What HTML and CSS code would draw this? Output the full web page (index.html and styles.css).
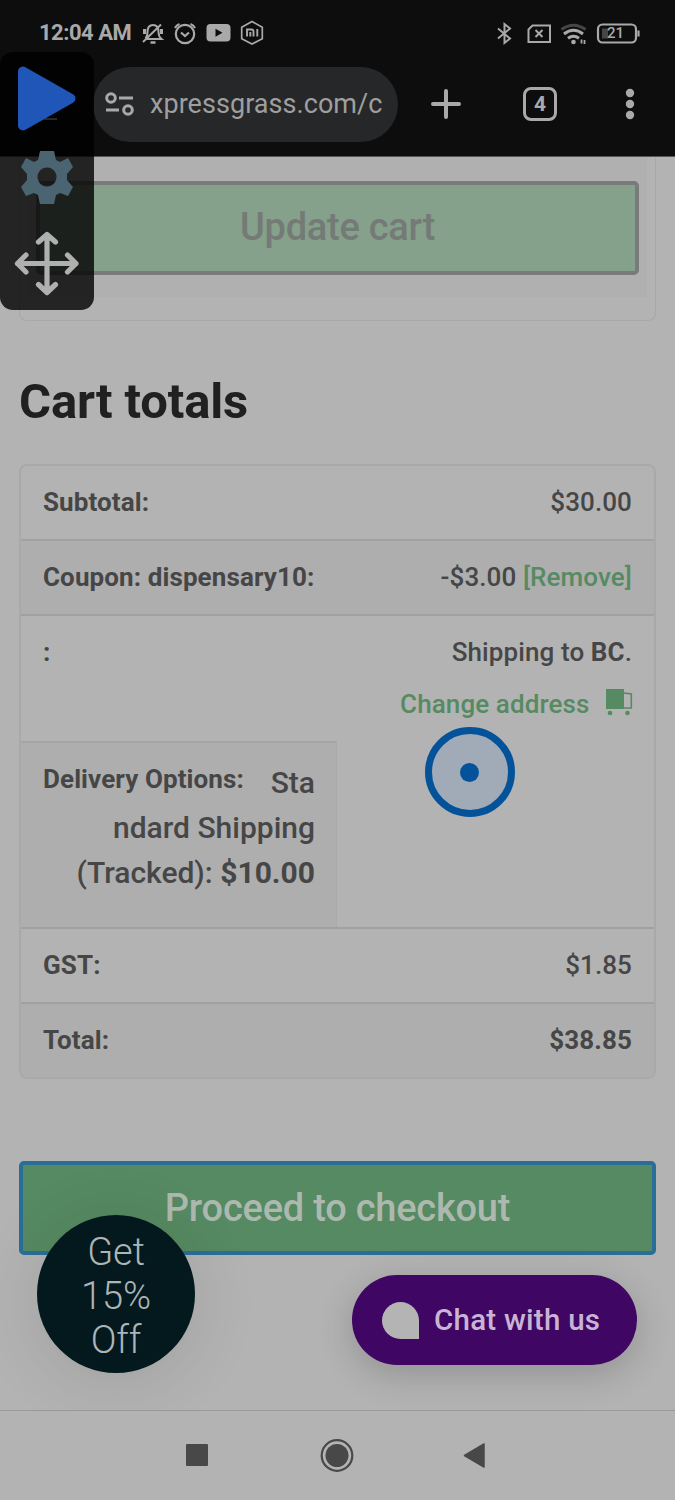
FILE: index.html
```html
<!DOCTYPE html>
<html lang="en">
<head>
<meta charset="utf-8">
<title>Cart</title>
<link rel="stylesheet" href="styles.css">
</head>
<body>
<div class="phone">
  <header class="chrome">
    <div class="status">
      <span class="clock">12:04 AM</span>
      <svg class="status-left" width="130" height="28" viewBox="140 18.500 130 28" fill="none" stroke="#a9a9a9" stroke-width="2">
        <path d="M147 38.500h14.500c-2.500-2-3-3.500-3-7 0-5-2.500-7-5.500-7s-5.500 2-5.500 7c0 3.500-.5 5-2 6.500M143 41.500L161 24"/><path d="M150.500 42h5" stroke-width="2.500"/><path d="M144.500 28.500v5M161.500 28.500v5" stroke-width="3"/>
        <circle cx="185" cy="33.500" r="9.200" stroke-width="2.200"/><path d="M181 32l4 3.500 4-3.500M175 27.500q1.500-3 4.500-4M195 27.500q-1.500-3-4.500-4" stroke-width="2.200"/>
        <rect x="206.500" y="23.500" width="24" height="17.500" rx="4" fill="#a9a9a9" stroke="none"/><path d="M215.500 28.300v8l7-4z" fill="#0d0d0d" stroke="none"/>
        <path d="M252 21l10.300 5.700v11.600L252 43.500l-10.300-5.200V26.700z" stroke-width="1.700"/><path d="M247 36v-7h4.500q2 0 2 2v5M250.300 31.500v4.500M257.300 28.500v7.500" stroke-width="1.900"/>
      </svg>
      <svg class="status-right" width="146" height="28" viewBox="496 18.500 146 28" fill="none" stroke="#a9a9a9" stroke-width="2">
        <path d="M498 28l12 10-5.500 4.500v-19l5.500 4.500-12 10"/>
        <path d="M528.500 29l4-4h17.500V41.500h-21.500z" stroke-width="2"/><path d="M535.500 29.500l7 7M542.500 29.500l-7 7" stroke-width="2"/>
        <path d="M561.500 29q12-8.500 24 0" stroke="#464646" stroke-width="3"/><path d="M564 33.500q9.500-7.500 19 0M568 37.800q5.500-4 11 0" stroke-width="3"/><circle cx="573.500" cy="41.500" r="2.300" fill="#a9a9a9" stroke="none"/><path d="M581.500 39v4M584.500 39.500v4" stroke-width="1.800"/>
        <rect x="598" y="24" width="38" height="18" rx="4.500" stroke-width="2.200"/><path d="M602 28h6v10h-6z" fill="#464646" stroke="none"/><path d="M638.500 30v6" stroke-width="2.200"/>
        <text x="615.500" y="37.700" text-anchor="middle" class="battery">21</text>
      </svg>
    </div>
    <div class="toolbar">
      <div class="address">
        <svg width="30" height="26" viewBox="0 0 30 26" fill="none" stroke="#a9a9a9" stroke-width="3"><circle cx="6" cy="7" r="4.300"/><circle cx="23" cy="19" r="4.300"/><path d="M14 7h14M1 19h13"/></svg>
        <span class="url">xpressgrass.com/c</span>
      </div>
      <svg class="plus" width="32" height="32" viewBox="0 0 32 32" fill="none" stroke="#a9a9a9" stroke-width="4" stroke-linecap="round"><path d="M16 3v26M3 16h26"/></svg>
      <span class="tabs">4</span>
      <svg class="dots" width="10" height="32" viewBox="0 0 10 32" fill="#a9a9a9"><circle cx="5" cy="5" r="4.200"/><circle cx="5" cy="16" r="4.200"/><circle cx="5" cy="27" r="4.200"/></svg>
    </div>
  </header>

  <main class="page">
    <section class="cart-form"><div class="cart-inner"><div class="btn-update"><span>Update cart</span></div></div></section>
    <h2 class="title"><span>Cart totals</span></h2>
    <section class="totals">
      <div class="row"><b>Subtotal:</b><span>$30.00</span></div>
      <div class="row shade"><b>Coupon: dispensary10:</b><span>-$3.00 <a>[Remove]</a></span></div>
      <div class="shipping">
        <div class="ship-left">
          <b class="colon">:</b>
          <div class="delivery"><b class="label">Delivery Options:</b>
            <div class="option"><span>Sta</span><br><span>ndard Shipping</span><br><span>(Tracked): <b>$10.00</b></span></div>
          </div>
        </div>
        <div class="ship-right">
          <div class="dest"><span>Shipping to <b>BC</b>.</span></div>
          <div class="change"><a>Change address</a>
            <svg width="28" height="28" viewBox="0 0 28 28" fill="#568a62"><path d="M1 1h18v20H1z"/><path d="M19 5l7.300 1v14H19" fill="none" stroke="#568a62" stroke-width="1.600"/><circle cx="5" cy="25" r="2.300"/><circle cx="22.500" cy="25" r="2.300"/></svg>
          </div>
        </div>
      </div>
      <div class="row"><b>GST:</b><span>$1.85</span></div>
      <div class="row shade last"><b>Total:</b><b>$38.85</b></div>
    </section>
    <div class="checkout"><span>Proceed to checkout</span></div>
  </main>

  <nav class="navbar">
    <svg width="675" height="89" viewBox="0 1411 675 89" fill="#484848"><rect x="186" y="1444" width="22" height="22" rx="1"/><circle cx="337" cy="1455.500" r="11.500"/><circle cx="337" cy="1455.500" r="15.300" fill="none" stroke="#484848" stroke-width="2.200"/><path d="M464.500 1455.500l19.500-11.500v23z" stroke="#484848" stroke-width="1.500" stroke-linejoin="round"/></svg>
  </nav>

  <div class="touch"><i></i></div>
  <div class="promo"><span>Get</span><span>15%</span><span>Off</span></div>
  <div class="chat"><i></i><span>Chat with us</span></div>
  <div class="widget">
    <svg width="94" height="258" viewBox="0 52 94 258">
      <path d="M44 118h13v2H44z" fill="#29292b"/>
      <path d="M23 71.500v54L70.500 98.500z" fill="#2056b8" stroke="#2056b8" stroke-width="10" stroke-linejoin="round"/>
      <path fill="#4a6472" fill-rule="evenodd" d="M40 151h14l2 9 4 2 8-4 5 9-6 7v6l6 7-5 9-8-3-4 2-2 9H40l-2-9-4-2-8 3-5-9 6-7v-6l-6-7 5-9 8 4 4-2zM47 167.500a9.500 9.500 0 1 0 .01 0z"/>
      <path d="M47 234.500v58M17.500 263.500h58.500M38.500 242l8.500-7.500 8.500 7.500M38.500 284.500l8.500 8 8.500-8M26 255l-8.500 8.500 8.500 8.500M67.500 255l8.500 8.500-8.500 8.500" fill="none" stroke="#b0b0b0" stroke-width="5.200" stroke-linecap="round" stroke-linejoin="round"/>
    </svg>
  </div>
</div>
</body>
</html>
```
FILE: styles.css
```css
* { box-sizing: border-box; }
body { margin: 0; font-family: Roboto, "Liberation Sans", sans-serif; color: #464646; }
.phone { position: relative; width: 675px; height: 1500px; overflow: hidden; background: #b3b3b3; display: flex; flex-direction: column; }
span, b, a { white-space: nowrap; }

/* Browser chrome */
.chrome { flex: none; height: 157px; background: #0d0d0d; border-bottom: 1px solid #555; color: #a9a9a9; }
.status { height: 65px; padding-left: 39px; display: flex; align-items: center; }
.clock { width: 101px; font-size: 22px; font-weight: 700; letter-spacing: -.5px; }
.status-right { margin-left: 226px; }
.battery { font-size: 15px; font-weight: 500; fill: #a9a9a9; stroke: none; }
.toolbar { height: 78px; padding-left: 93px; display: flex; align-items: center; }
.address { width: 305px; height: 75px; border-radius: 38px; background: #262729; display: flex; align-items: center; padding-left: 12px; gap: 15px; }
.url { font-size: 27px; letter-spacing: .05px; color: #9f9f9f; }
.plus { margin-left: 32px; }
.tabs { margin-left: 61px; width: 34px; height: 34px; border: 3.500px solid #a9a9a9; border-radius: 8px; display: grid; place-items: center; font-size: 21px; font-weight: 700; }
.dots { margin-left: 68px; }

/* Cart page */
.page { flex: none; height: 1253px; padding: 0 19px; }
.cart-form { height: 164px; border: 1px solid #a7a7a7; border-top: 0; border-radius: 0 0 8px 8px; padding: 0 8px 23px; }
.cart-inner { height: 140px; background: #b0b0b0; padding: 24px 8px 0; }
.btn-update { height: 94px; border: 4px solid #787b79; border-radius: 5px; background: #85a08b; color: #747a76; display: grid; place-items: center; font-size: 38px; letter-spacing: -.25px; font-weight: 500; padding-bottom: 2px; }
.title { margin: 52px 0 34px; height: 57px; line-height: 57px; font-size: 49px; letter-spacing: -.15px; font-weight: 700; color: #202020; }
.totals { height: 615px; border: 2px solid #a9a9a9; border-radius: 8px; overflow: hidden; font-size: 26px; letter-spacing: .1px; font-weight: 500; }
.totals b { font-weight: 700; }
.row { height: 75px; border-bottom: 2px solid #a1a1a1; display: flex; align-items: center; justify-content: space-between; padding: 0 22px 2px; }
.shade { background: #aeaeae; }
.last { border: 0; padding-bottom: 4px; }
.totals a { color: #568a62; }
.shipping { height: 313px; border-bottom: 2px solid #a1a1a1; display: flex; }
.ship-left { width: 316px; }
.ship-right { flex: 1; padding-right: 22px; text-align: right; }
.colon { display: block; height: 125px; padding: 21px 22px; line-height: 30px; }
.delivery { height: 186px; background: #aeaeae; border-top: 2px solid #a5a5a5; border-right: 1px solid #aaa; padding: 17px 21px 17px 22px; }
.label { float: left; line-height: 39px; }
.option { text-align: right; font-size: 30px; letter-spacing: 0; line-height: 45px; }
.dest { height: 72px; line-height: 72px; }
.change { height: 32px; display: flex; align-items: center; justify-content: flex-end; gap: 15.500px; }
.change svg { margin-right: -1px; margin-top: -5px; }
.checkout { margin-top: 82px; height: 94px; border: 4px solid #2a6e98; border-radius: 5px; background: #568a62; color: #adb9af; display: grid; place-items: center; font-size: 38px; letter-spacing: -.23px; font-weight: 500; }

.navbar { flex: none; height: 90px; border-top: 1px solid #999; background: #b3b3b3; position: relative; z-index: 3; }
.navbar svg { display: block; }

/* Floating layers */
.touch { position: absolute; left: 424.500px; top: 727px; width: 90px; height: 90px; border: 7.500px solid #04539a; border-radius: 50%; background: #a0abb7; display: grid; place-items: center; }
.touch i { width: 19px; height: 19px; border-radius: 50%; background: #04539a; }
.promo { position: absolute; left: 37px; top: 1215px; width: 158px; height: 158px; border-radius: 50%; background: #03191d; color: #acb5b7; box-shadow: 0 8px 70px rgba(0,0,0,.11); display: flex; flex-direction: column; align-items: center; padding-top: 15px; font-size: 38px; letter-spacing: -.1px; line-height: 44px; font-weight: 300; }
.chat { position: absolute; left: 352px; top: 1275px; width: 285px; height: 90px; border-radius: 45px; background: #3f0663; color: #c9b4d3; box-shadow: 0 9px 36px rgba(0,0,0,.19); display: flex; align-items: center; padding-left: 30px; gap: 15px; font-size: 29.500px; letter-spacing: .25px; font-weight: 500; }
.chat i { width: 37px; height: 37px; border-radius: 50% 50% 0 50%; background: #b4b4b4; }
.widget { position: absolute; left: 0; top: 52px; width: 94px; height: 258px; border-radius: 13px; background: rgba(0,0,0,.8); z-index: 4; }
.widget svg { display: block; }
```
